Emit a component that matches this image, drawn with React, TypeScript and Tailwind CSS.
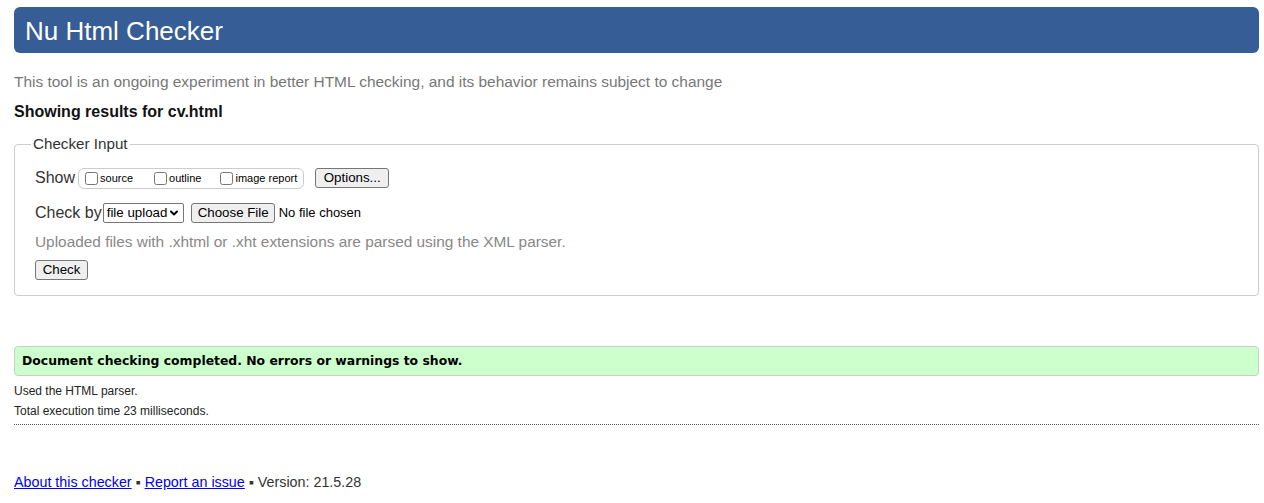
import { ChevronDown } from "lucide-react";

const btn =
  "h-5 px-[6px] bg-[#efefef] border border-[#767676] rounded-[3px] text-[13.3px] text-black leading-none whitespace-nowrap";

export default function App() {
  return (
    <div className="min-h-[503px] bg-white pl-[14px] pr-[5px] pt-[7px] font-['Liberation_Sans',Arial,sans-serif] text-[#333]">
      <h1 className="h-[46px] rounded-[6px] bg-[#365d95] pl-[11px] text-[26px] leading-[48px] text-white">
        Nu Html Checker
      </h1>

      <p className="mt-[19px] text-[15.45px] leading-[20px] text-[#777]">
        This tool is an ongoing experiment in better HTML checking, and its behavior remains subject to change
      </p>
      <p className="mt-[10px] text-[16px] leading-[20px] font-bold text-[#111]">
        Showing results for cv.html
      </p>

      <fieldset className="mt-[13px] rounded-[4px] border border-[#ccc] px-[20px] pb-[14px] pt-[14px]">
        <legend className="ml-[-4px] px-[2px] text-[15.2px] leading-[18px] text-[#333]">Checker Input</legend>

        <div className="flex h-[22px] items-center">
          <span className="text-[16px] leading-[18px]">Show</span>
          <div className="ml-[3px] flex h-[21px] items-center rounded-[6px] border border-[#ccc] pl-[6px] pr-[6px] text-[11px] text-black">
            <label className="flex items-center">
              <input type="checkbox" className="m-0 h-[13px] w-[13px]" />
              <span className="ml-[2px]">source</span>
            </label>
            <label className="ml-[21px] flex items-center">
              <input type="checkbox" className="m-0 h-[13px] w-[13px]" />
              <span className="ml-[2px]">outline</span>
            </label>
            <label className="ml-[19px] flex items-center">
              <input type="checkbox" className="m-0 h-[13px] w-[13px]" />
              <span className="ml-[2px]">image report</span>
            </label>
          </div>
          <button className={`${btn} ml-[11px] w-[74px]`}>Options...</button>
        </div>

        <div className="mt-[13px] flex h-[22px] items-center">
          <span className="text-[16px] leading-[18px]">Check by</span>
          <div className="ml-[1px] flex h-[20px] w-[81px] items-center justify-between rounded-[2px] border border-[#767676] pl-[3px] pr-[3px] text-[13.3px] text-black">
            <span>file upload</span>
            <ChevronDown className="h-[12px] w-[12px]" strokeWidth={4} />
          </div>
          <button className={`${btn} ml-[7px] w-[84px]`}>Choose File</button>
          <span className="ml-[4px] text-[13px] text-black">No file chosen</span>
        </div>

        <p className="mt-[9px] text-[15.4px] leading-[18px] text-[#888]">
          Uploaded files with .xhtml or .xht extensions are parsed using the XML parser.
        </p>

        <button className={`${btn} mt-[9px] w-[53px]`}>Check</button>
      </fieldset>

      <div className="mt-[50px] rounded-[4px] border border-[#ccc] bg-[#ccffcc] px-[7px] text-[12.4px] leading-[28px] font-bold text-black font-['DejaVu_Sans',Verdana,sans-serif]">
        Document checking completed. No errors or warnings to show.
      </div>

      <p className="mt-[7px] text-[12px] leading-[16px] text-[#222]">Used the HTML parser.</p>
      <p className="mt-[4px] text-[12px] leading-[16px] text-[#222]">Total execution time 23 milliseconds.</p>
      <div className="mt-[5px] border-b border-dotted border-[#555]" />

      <p className="mt-[48px] text-[14.3px] leading-[18px] text-[#333]">
        <a href="#" className="text-[#0000ee] underline">About this checker</a>
        {" \u25aa "}
        <a href="#" className="text-[#0000ee] underline">Report an issue</a>
        {" \u25aa Version: 21.5.28"}
      </p>
    </div>
  );
}
